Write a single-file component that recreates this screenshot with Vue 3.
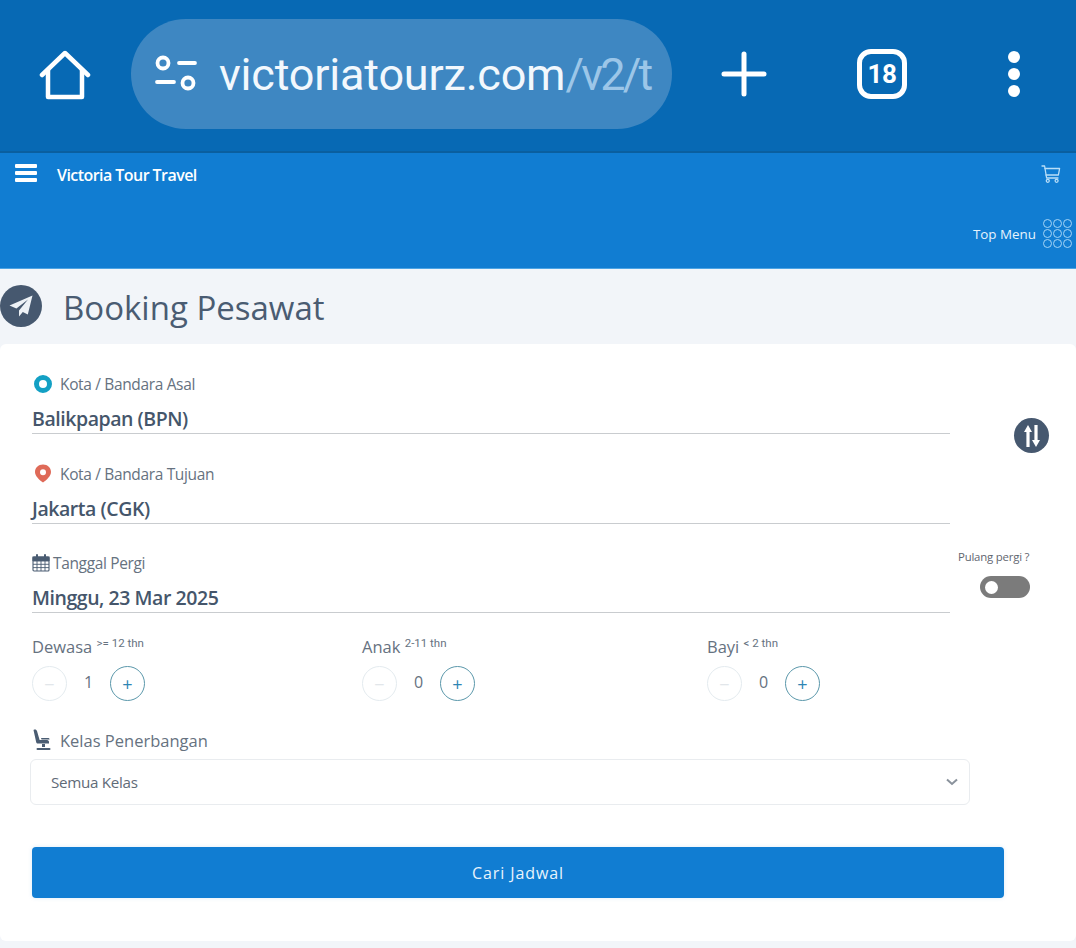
<template>
  <div class="screen">
    <!-- Browser chrome -->
    <div class="browser-bar">
      <svg class="home-icon" width="52" height="52" viewBox="0 0 52 52" fill="none" stroke="#fff" stroke-width="4.5" stroke-linejoin="round" stroke-linecap="round">
        <path d="M3 25 L26 3 L49 25" />
        <path d="M9 20 V47 H43 V20" />
      </svg>
      <div class="url-pill">
        <svg class="tune-icon" width="42" height="38" viewBox="0 0 42 38" fill="none" stroke="#fff" stroke-width="3.8" stroke-linecap="round">
          <circle cx="8" cy="9" r="5.5" />
          <path d="M24 9 H40" />
          <path d="M2 28 H19" />
          <circle cx="33" cy="29" r="5.5" />
        </svg>
        <div class="url-text"><span class="host">victoriatourz.com</span><span class="path">/v2/t</span></div>
      </div>
      <svg class="plus-icon" width="46" height="46" viewBox="0 0 46 46" stroke="#fff" stroke-width="5" stroke-linecap="round">
        <path d="M23 3 V43 M3 23 H43" />
      </svg>
      <div class="tabs-count">18</div>
      <div class="kebab"><span></span><span></span><span></span></div>
    </div>

    <!-- Site header -->
    <header class="site-header">
      <div class="header-top">
        <div class="burger"><span></span><span></span><span></span></div>
        <span class="brand">Victoria Tour Travel</span>
        <svg class="cart-icon" width="20" height="20" viewBox="0 0 20 20" fill="none" stroke="#b9def8" stroke-width="1.3" stroke-linejoin="round" stroke-linecap="round">
          <path d="M1 2 H3.6 L5.6 14 H17" />
          <path d="M4 4.5 H18.6 L17.4 11 H5" />
          <circle cx="6.8" cy="16.8" r="1.5" />
          <circle cx="15.6" cy="16.8" r="1.5" />
        </svg>
      </div>
      <div class="header-bottom">
        <span class="top-menu">Top Menu</span>
        <div class="dots-grid"><i v-for="n in 9" :key="n"></i></div>
      </div>
    </header>

    <!-- Page title -->
    <div class="page-title">
      <div class="plane-badge">
        <svg width="26" height="26" viewBox="0 0 26 26" fill="#eef2f6">
          <path d="M24.5 2.5 L1.5 12.4 L8.4 15.6 L20 6.6 L11 17.4 V23.6 L14.8 19 L19.8 21.4 Z" />
        </svg>
      </div>
      <h1>Booking Pesawat</h1>
    </div>

    <!-- Booking form -->
    <main class="card">
      <div class="route-row">
        <div class="route-fields">
          <div class="field">
            <label class="field-label">
              <span class="origin-dot"></span>
              Kota / Bandara Asal
            </label>
            <div class="field-value">Balikpapan (BPN)</div>
          </div>
          <div class="field">
            <label class="field-label">
              <svg class="pin-icon" width="18" height="19" viewBox="0 0 18 19">
                <path fill="#df6a58" fill-rule="evenodd" d="M9 0.5 C4.3 0.5 1 3.9 1 8 C1 12 5.4 16 9 18.6 C12.6 16 17 12 17 8 C17 3.9 13.7 0.5 9 0.5 Z M9 5.2 A3 3 0 1 1 9 11.2 A3 3 0 1 1 9 5.2 Z" />
              </svg>
              Kota / Bandara Tujuan
            </label>
            <div class="field-value">Jakarta (CGK)</div>
          </div>
          <div class="field">
            <label class="field-label date-label">
              <svg width="18" height="18" viewBox="0 0 18 18" fill="none" stroke="#4a5c72" stroke-width="1.1">
                <rect x="1" y="3" width="16" height="14" rx="1" />
                <path d="M1 7 H17 M1 10.3 H17 M1 13.6 H17 M5 7 V17 M9 7 V17 M13 7 V17" stroke-width="0.9" />
                <path d="M1 3 H17 V6.5 H1 Z" fill="#4a5c72" />
                <path d="M5 1 V4.5 M13 1 V4.5" stroke-width="2" stroke-linecap="round" />
              </svg>
              Tanggal Pergi
            </label>
            <div class="field-value">Minggu, 23 Mar 2025</div>
          </div>
        </div>
        <div class="route-side">
          <button class="swap-btn" type="button">
            <svg width="20" height="24" viewBox="0 0 20 24" fill="#fff">
              <path d="M6 1 L10 8 H7.6 V23 H4.4 V8 H2 Z" />
              <path d="M14 23 L10 16 H12.4 V1 H15.6 V16 H18 Z" />
            </svg>
          </button>
          <div class="return-toggle">
            <span>Pulang pergi ?</span>
            <div class="toggle"><i></i></div>
          </div>
        </div>
      </div>

      <div class="pax-row">
        <div v-for="p in passengers" :key="p.name" class="pax">
          <div class="pax-label">{{ p.name }} <sup>{{ p.note }}</sup></div>
          <div class="stepper">
            <button class="step minus" type="button">−</button>
            <span class="count">{{ p.count }}</span>
            <button class="step plus" type="button">+</button>
          </div>
        </div>
      </div>

      <div class="class-label">
        <svg width="20" height="22" viewBox="0 0 20 22" fill="#4a5c72">
          <path d="M1.5 1 C3 0 4.6 0.6 5 2 L7.6 11 H15 C16.4 11 17 12 17 13 V14.5 H6 C5 14.5 4.4 14 4.2 13.2 Z" />
          <path d="M9 9 H16 C17 9 17.6 9.6 17.6 10.4 H9.5 Z" />
          <path d="M10 15 H13 V18 H10 Z" />
          <rect x="4.5" y="19" width="14" height="2" rx="1" />
        </svg>
        <span>Kelas Penerbangan</span>
      </div>
      <div class="class-select">
        <span>Semua Kelas</span>
        <svg width="12" height="8" viewBox="0 0 12 8" fill="none" stroke="#8a929c" stroke-width="2">
          <path d="M1 1.4 L6 6 L11 1.4" />
        </svg>
      </div>

      <button class="search-btn" type="button">Cari Jadwal</button>
    </main>
  </div>
</template>

<script setup>
const passengers = [
  { name: 'Dewasa', note: '>= 12 thn', count: 1 },
  { name: 'Anak', note: '2-11 thn', count: 0 },
  { name: 'Bayi', note: '< 2 thn', count: 0 }
]
</script>

<style>
html, body { margin: 0; background: #f2f5f9; }
</style>

<style scoped>
.screen {
  width: 1076px;
  height: 948px;
  overflow: hidden;
  background: #f2f5f9;
  font-family: "Open Sans", "Liberation Sans", sans-serif;
  color: #4a5c72;
}

/* Browser bar */
.browser-bar {
  height: 153px;
  box-sizing: border-box;
  padding-bottom: 4px;
  border-bottom: 2px solid #0a5f9f;
  background: #0769b4;
  display: flex;
  align-items: center;
}
.home-icon { margin: 5px 0 0 39px; flex-shrink: 0; }
.url-pill {
  margin-left: 40px;
  width: 541px;
  height: 110px;
  border-radius: 55px;
  background: #3e87c2;
  display: flex;
  align-items: center;
  box-sizing: border-box;
  padding-left: 24px;
  flex-shrink: 0;
}
.tune-icon { flex-shrink: 0; margin-top: -2px; }
.url-text {
  margin-left: 22px;
  width: 431px;
  white-space: nowrap;
  font-family: Roboto, sans-serif;
  font-size: 45px;
  letter-spacing: -0.2px;
  margin-top: 2px;
  line-height: 56px;
}
.host { color: #f2f8fd; }
.path { color: #9cc6e8; letter-spacing: -2.8px; }
.plus-icon { margin-left: 49px; flex-shrink: 0; }
.tabs-count {
  margin-left: 90px;
  width: 50px;
  height: 50px;
  box-sizing: border-box;
  border: 5px solid #fff;
  border-radius: 14px;
  color: #fff;
  font-family: Roboto, sans-serif;
  font-weight: 700;
  font-size: 26px;
  letter-spacing: -0.5px;
  display: flex;
  align-items: center;
  justify-content: center;
  flex-shrink: 0;
}
.kebab {
  margin-left: 101px;
  display: flex;
  flex-direction: column;
  gap: 5px;
  flex-shrink: 0;
}
.kebab span { width: 12px; height: 12px; border-radius: 50%; background: #fff; }

/* Site header */
.site-header {
  height: 116px;
  box-sizing: border-box;
  background: #117dd2;
  border-bottom: 1px solid #4da4e4;
  display: flex;
  flex-direction: column;
  justify-content: space-between;
  padding: 10px 4px 20px 15px;
}
.header-top { display: flex; align-items: flex-start; padding-right: 11px; }
.burger { display: flex; flex-direction: column; gap: 3.5px; width: 22px; margin-top: 1px; }
.burger span { height: 3.5px; border-radius: 1px; background: #fff; }
.brand {
  margin-left: 20px;
  margin-top: 1px;
  color: #fff;
  font-size: 16px;
  line-height: 22px;
  font-weight: 600;
  letter-spacing: -0.55px;
}
.cart-icon { margin-left: auto; margin-top: 1px; }
.header-bottom { display: flex; align-items: center; justify-content: flex-end; gap: 7px; }
.top-menu { color: #e6f3fd; font-size: 13.4px; font-weight: 500; }
.dots-grid {
  display: grid;
  grid-template-columns: repeat(3, 9px);
  grid-auto-rows: 9px;
  gap: 1px;
}
.dots-grid i { border: 1.5px solid #a4d4f6; border-radius: 50%; box-sizing: border-box; }

/* Title */
.page-title { height: 75px; display: flex; align-items: center; }
.plane-badge {
  width: 42px;
  height: 42px;
  border-radius: 50%;
  background: #46586f;
  display: flex;
  align-items: center;
  justify-content: center;
  margin-top: -2px;
}
.page-title h1 {
  margin: 3px 0 0 21px;
  font-size: 33px;
  font-weight: 400;
  line-height: 44px;
  color: #4a5c72;
}

/* Card */
.card {
  height: 597px;
  box-sizing: border-box;
  background: #fff;
  border-radius: 6px;
  padding: 29px 0 0 32px;
}
.route-row { display: flex; }
.route-fields { width: 918px; flex-shrink: 0; }
.field { height: 89.5px; }
.field:last-child { height: auto; }
.field-label {
  display: flex;
  align-items: center;
  height: 22px;
  gap: 8px;
  padding-left: 2px;
  font-size: 15.5px;
  letter-spacing: -0.35px;
  color: #66727f;
}
.origin-dot {
  width: 18px;
  height: 18px;
  box-sizing: border-box;
  border-radius: 50%;
  border: 5.5px solid #13a0c4;
  background: #fff;
}
.date-label { gap: 3px; padding-left: 0; }
.pin-icon { flex-shrink: 0; }
.field-value {
  margin-top: 11px;
  height: 27px;
  line-height: 26px;
  border-bottom: 1.5px solid #c9cccf;
  font-size: 19.5px;
  font-weight: 600;
  letter-spacing: -0.45px;
  color: #45566b;
}

.route-side { flex: 1; display: flex; flex-direction: column; }
.swap-btn {
  margin: 45px 0 0 64px;
  width: 35px;
  height: 35px;
  padding: 0;
  border: none;
  border-radius: 50%;
  background: #46586f;
  display: flex;
  align-items: center;
  justify-content: center;
}
.return-toggle {
  margin-top: 96px;
  padding-left: 8px;
  display: flex;
  flex-direction: column;
  font-size: 11.4px;
  letter-spacing: -0.2px;
  color: #5f6670;
}
.toggle {
  margin: 12px 0 0 22px;
  width: 50px;
  height: 22px;
  border-radius: 11px;
  background: #7b7b7b;
  display: flex;
  align-items: center;
  padding-left: 5px;
  box-sizing: border-box;
}
.toggle i { width: 13px; height: 13px; border-radius: 50%; background: #fff; }

/* Passengers */
.pax-row {
  margin-top: 23px;
  display: grid;
  grid-template-columns: 330px 345px auto;
}
.pax-label { font-size: 16.5px; line-height: 22px; color: #66727f; }
.pax-label sup {
  font-family: Roboto, sans-serif;
  font-size: 11.5px;
  line-height: 0;
  vertical-align: 6px;
  color: #66727f;
}
.stepper { margin-top: 8px; display: flex; align-items: center; }
.step {
  width: 35px;
  height: 35px;
  padding: 0;
  border-radius: 50%;
  background: #fff;
  font-family: "Open Sans", sans-serif;
  font-size: 18px;
  line-height: 1;
  flex-shrink: 0;
}
.minus { border: 1.5px solid #e4ebef; color: #e2e6ea; }
.plus { border: 1.5px solid #5b98ab; color: #2f86b4; }
.count {
  width: 43px;
  text-align: center;
  font-size: 16px;
  color: #66727f;
  margin-top: -3px;
}

/* Class */
.class-label {
  margin-top: 27px;
  display: flex;
  align-items: center;
  gap: 8px;
  height: 24px;
  font-size: 16.5px;
  color: #66727f;
}
.class-select {
  margin: 7px 0 0 -2px;
  width: 940px;
  height: 46px;
  box-sizing: border-box;
  border: 1px solid #e9ecef;
  border-radius: 6px;
  padding: 0 11px 0 20px;
  display: flex;
  align-items: center;
  justify-content: space-between;
  font-size: 15.2px;
  letter-spacing: -0.3px;
  color: #5f6b78;
}
.search-btn {
  display: block;
  margin-top: 42px;
  width: 972px;
  height: 51px;
  border: none;
  border-radius: 4px;
  background: #117dd2;
  color: #e8f3fc;
  font-family: "Open Sans", sans-serif;
  font-size: 16px;
  letter-spacing: 0.9px;
  box-shadow: 0 0 4px rgba(17, 125, 210, 0.15);
}
</style>
